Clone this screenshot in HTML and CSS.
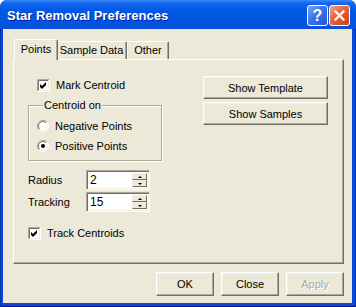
FILE: index.html
```html
<!DOCTYPE html>
<html lang="en">
<head>
    <meta charset="UTF-8">
    <title>Star Removal Preferences</title>
    <link rel="stylesheet" href="styles.css">
</head>
<body>
    <div class="window">
        <div class="titlebar">
            <span class="title">Star Removal Preferences</span>
            <div class="caption-buttons">
                <span class="cap-btn help">?</span>
                <span class="cap-btn close">
                    <svg width="11" height="11" viewBox="0 0 11 11"><path d="M1.5 1.5 L9.5 9.5 M9.5 1.5 L1.5 9.5" stroke="#fff" stroke-width="2.2" stroke-linecap="square"/></svg>
                </span>
            </div>
        </div>
        <div class="frame">
            <div class="client">
                <div class="tabs">
                    <span class="tab tab-points active">Points</span>
                    <span class="tab tab-sample">Sample Data</span>
                    <span class="tab tab-other">Other</span>
                </div>
                <div class="panel">
                    <div class="col-left">
                        <div class="check mark-row">
                            <svg class="box" width="13" height="13" viewBox="0 0 13 13">
                                <rect x="0" y="0" width="13" height="13" fill="#fff"/>
                                <path d="M0.5 12.5 V0.5 H12.5" stroke="#aca899" fill="none"/>
                                <path d="M0.5 12.5 H12.5 V0.5" stroke="#fff" fill="none"/>
                                <path d="M1.5 11.5 V1.5 H11.5" stroke="#716f64" fill="none"/>
                                <path d="M1.5 11.5 H11.5 V1.5" stroke="#f1efe2" fill="none"/>
                                <polygon points="3,5 5,7 9,3 9,6 5,10 3,8" fill="#000"/>
                            </svg>
                            <span>Mark Centroid</span>
                        </div>
                        <fieldset class="group">
                            <legend>Centroid on</legend>
                            <div class="radio">
                                <svg width="12" height="12" viewBox="0 0 12 12">
                                    <circle cx="6" cy="6" r="5.5" fill="#fff"/>
                                    <path d="M2.1 9.9 A5.5 5.5 0 0 1 9.9 2.1" stroke="#aca899" fill="none"/>
                                    <path d="M9.9 2.1 A5.5 5.5 0 0 1 2.1 9.9" stroke="#fff" fill="none"/>
                                    <path d="M2.8 9.2 A4.5 4.5 0 0 1 9.2 2.8" stroke="#716f64" fill="none"/>
                                    <path d="M9.2 2.8 A4.5 4.5 0 0 1 2.8 9.2" stroke="#f1efe2" fill="none"/>
                                </svg>
                                <span>Negative Points</span>
                            </div>
                            <div class="radio">
                                <svg width="12" height="12" viewBox="0 0 12 12">
                                    <circle cx="6" cy="6" r="5.5" fill="#fff"/>
                                    <path d="M2.1 9.9 A5.5 5.5 0 0 1 9.9 2.1" stroke="#aca899" fill="none"/>
                                    <path d="M9.9 2.1 A5.5 5.5 0 0 1 2.1 9.9" stroke="#fff" fill="none"/>
                                    <path d="M2.8 9.2 A4.5 4.5 0 0 1 9.2 2.8" stroke="#716f64" fill="none"/>
                                    <path d="M9.2 2.8 A4.5 4.5 0 0 1 2.8 9.2" stroke="#f1efe2" fill="none"/>
                                    <circle cx="6" cy="6" r="2" fill="#000"/>
                                </svg>
                                <span>Positive Points</span>
                            </div>
                        </fieldset>
                        <div class="field-row radius-row">
                            <span class="field-label">Radius</span>
                            <div class="spin">
                                <span class="spin-value">2</span>
                                <div class="spin-btns">
                                    <span class="spin-btn up"></span>
                                    <span class="spin-btn down"></span>
                                </div>
                            </div>
                        </div>
                        <div class="field-row tracking-row">
                            <span class="field-label">Tracking</span>
                            <div class="spin">
                                <span class="spin-value">15</span>
                                <div class="spin-btns">
                                    <span class="spin-btn up"></span>
                                    <span class="spin-btn down"></span>
                                </div>
                            </div>
                        </div>
                        <div class="check track-row">
                            <svg class="box" width="13" height="13" viewBox="0 0 13 13">
                                <rect x="0" y="0" width="13" height="13" fill="#fff"/>
                                <path d="M0.5 12.5 V0.5 H12.5" stroke="#aca899" fill="none"/>
                                <path d="M0.5 12.5 H12.5 V0.5" stroke="#fff" fill="none"/>
                                <path d="M1.5 11.5 V1.5 H11.5" stroke="#716f64" fill="none"/>
                                <path d="M1.5 11.5 H11.5 V1.5" stroke="#f1efe2" fill="none"/>
                                <polygon points="3,5 5,7 9,3 9,6 5,10 3,8" fill="#000"/>
                            </svg>
                            <span>Track Centroids</span>
                        </div>
                    </div>
                    <div class="col-right">
                        <button class="btn wide">Show Template</button>
                        <button class="btn wide">Show Samples</button>
                    </div>
                </div>
                <div class="actions">
                    <button class="btn">OK</button>
                    <button class="btn">Close</button>
                    <button class="btn disabled">Apply</button>
                </div>
            </div>
        </div>
    </div>
</body>
</html>
```

FILE: styles.css
```css
body {
    margin: 0;
    font-family: "Liberation Sans", Arial, sans-serif;
    font-size: 11px;
    color: #000;
    background: #fff;
}
.window {
    width: 356px;
    height: 307px;
    display: flex;
    flex-direction: column;
    border-radius: 7px 7px 0 0;
    overflow: hidden;
    background: #0842d6;
}
.titlebar {
    height: 29px;
    flex: none;
    display: flex;
    align-items: center;
    justify-content: space-between;
    padding: 0 6px 0 7px;
    background: linear-gradient(#3a8af5 0%, #1468ef 10%, #0058e6 35%, #0055e3 75%, #0b4fd8 100%);
}
.title {
    color: #fff;
    font-weight: bold;
    font-size: 13px;
    padding-top: 2px;
    text-shadow: 1px 1px #0a1e8c;
}
.caption-buttons {
    display: flex;
    gap: 1px;
    padding-top: 2px;
}
.cap-btn {
    width: 19px;
    height: 19px;
    border: 1px solid #fff;
    border-radius: 3px;
    display: flex;
    align-items: center;
    justify-content: center;
    color: #fff;
    font-weight: bold;
    font-size: 16px;
}
.help {
    background: linear-gradient(135deg, #78a6f8 0%, #3a73ee 45%, #1e55d8 100%);
}
.close {
    background: linear-gradient(135deg, #f2a48c 0%, #e2643a 45%, #c9431d 100%);
}
.frame {
    flex: 1;
    padding: 0 4px 4px 3px;
    background: #0a48dc;
    box-shadow: inset 1px 0 #0030b0, inset -1px 0 #0030b0, inset 0 -1px #00138c;
}
.client {
    height: 100%;
    box-sizing: border-box;
    background: #ece9d8;
    padding: 9px 8px 0 10px;
}
.tabs {
    display: flex;
    align-items: flex-end;
    height: 21px;
    padding-left: 3px;
}
.tab {
    height: 17px;
    line-height: 17px;
    box-sizing: content-box;
    text-align: center;
    border: 1px solid;
    border-color: #fff #716f64 transparent #fff;
    border-bottom: none;
    border-radius: 2px 2px 0 0;
    box-shadow: inset -1px 0 #aca899;
}
.tab-points {
    width: 38px;
}
.tab-sample {
    width: 69px;
}
.tab-other {
    width: 40px;
}
.tab.active {
    height: 20px;
    line-height: 18px;
    margin: 0 -2px -1px;
    padding: 0 2px;
    position: relative;
    z-index: 1;
    background: #ece9d8;
}
.panel {
    height: 205px;
    box-sizing: border-box;
    border: 1px solid;
    border-color: #fff #716f64 #716f64 #fff;
    box-shadow: inset -1px -1px #aca899;
    padding: 16px 0 0 14px;
    display: flex;
    align-items: flex-start;
}
.col-left {
    width: 134px;
    padding-top: 2px;
}
.col-right {
    margin-left: 41px;
    display: flex;
    flex-direction: column;
    gap: 3px;
}
.check, .radio {
    display: flex;
    align-items: center;
    gap: 6px;
    height: 14px;
}
.check svg, .radio svg {
    flex: none;
}
.mark-row {
    margin-left: 9px;
}
.group {
    margin: 7px 0 0;
    padding: 8px 0 7px 8px;
    border: 1px solid #aca899;
    box-shadow: inset 1px 1px #fff, 1px 1px #fff;
    display: flex;
    flex-direction: column;
    gap: 6px;
}
.group legend {
    padding: 0 1px;
    margin-left: 6px;
    line-height: 12px;
    background: #ece9d8;
}
.field-row {
    display: flex;
    align-items: center;
}
.radius-row {
    margin-top: 9px;
}
.tracking-row {
    margin-top: 2px;
}
.field-label {
    width: 58px;
}
.spin {
    width: 64px;
    height: 20px;
    box-sizing: border-box;
    border: 1px solid;
    border-color: #aca899 #fff #fff #aca899;
    box-shadow: inset 1px 1px #716f64, inset -1px -1px #f1efe2;
    background: #fff;
    padding: 2px 2px 2px 3px;
    display: flex;
}
.spin-value {
    flex: 1;
    line-height: 14px;
    font-size: 12px;
}
.spin-btns {
    display: flex;
    flex-direction: column;
    width: 15px;
}
.spin-btn {
    height: 8px;
    box-sizing: border-box;
    background: #ece9d8;
    border: 1px solid;
    border-color: #f1efe2 #716f64 #716f64 #f1efe2;
    display: flex;
    align-items: center;
    justify-content: center;
}
.spin-btn::after {
    content: "";
    border-left: 2px solid transparent;
    border-right: 2px solid transparent;
}
.spin-btn.up::after {
    border-bottom: 2px solid #000;
}
.spin-btn.down::after {
    border-top: 2px solid #000;
}
.track-row {
    margin-top: 14px;
}
.btn {
    font-family: inherit;
    font-size: 11px;
    color: #000;
    background: #ece9d8;
    border: 1px solid;
    border-color: #fff #716f64 #716f64 #fff;
    box-shadow: inset -1px -1px #aca899, inset 1px 1px #f1efe2;
    padding: 0;
    width: 58px;
    height: 24px;
}
.btn.wide {
    width: 125px;
    height: 23px;
}
.btn.disabled {
    color: #aca899;
    text-shadow: 1px 1px #fff;
}
.actions {
    display: flex;
    justify-content: flex-end;
    gap: 7px;
    margin-top: 8px;
}
```
